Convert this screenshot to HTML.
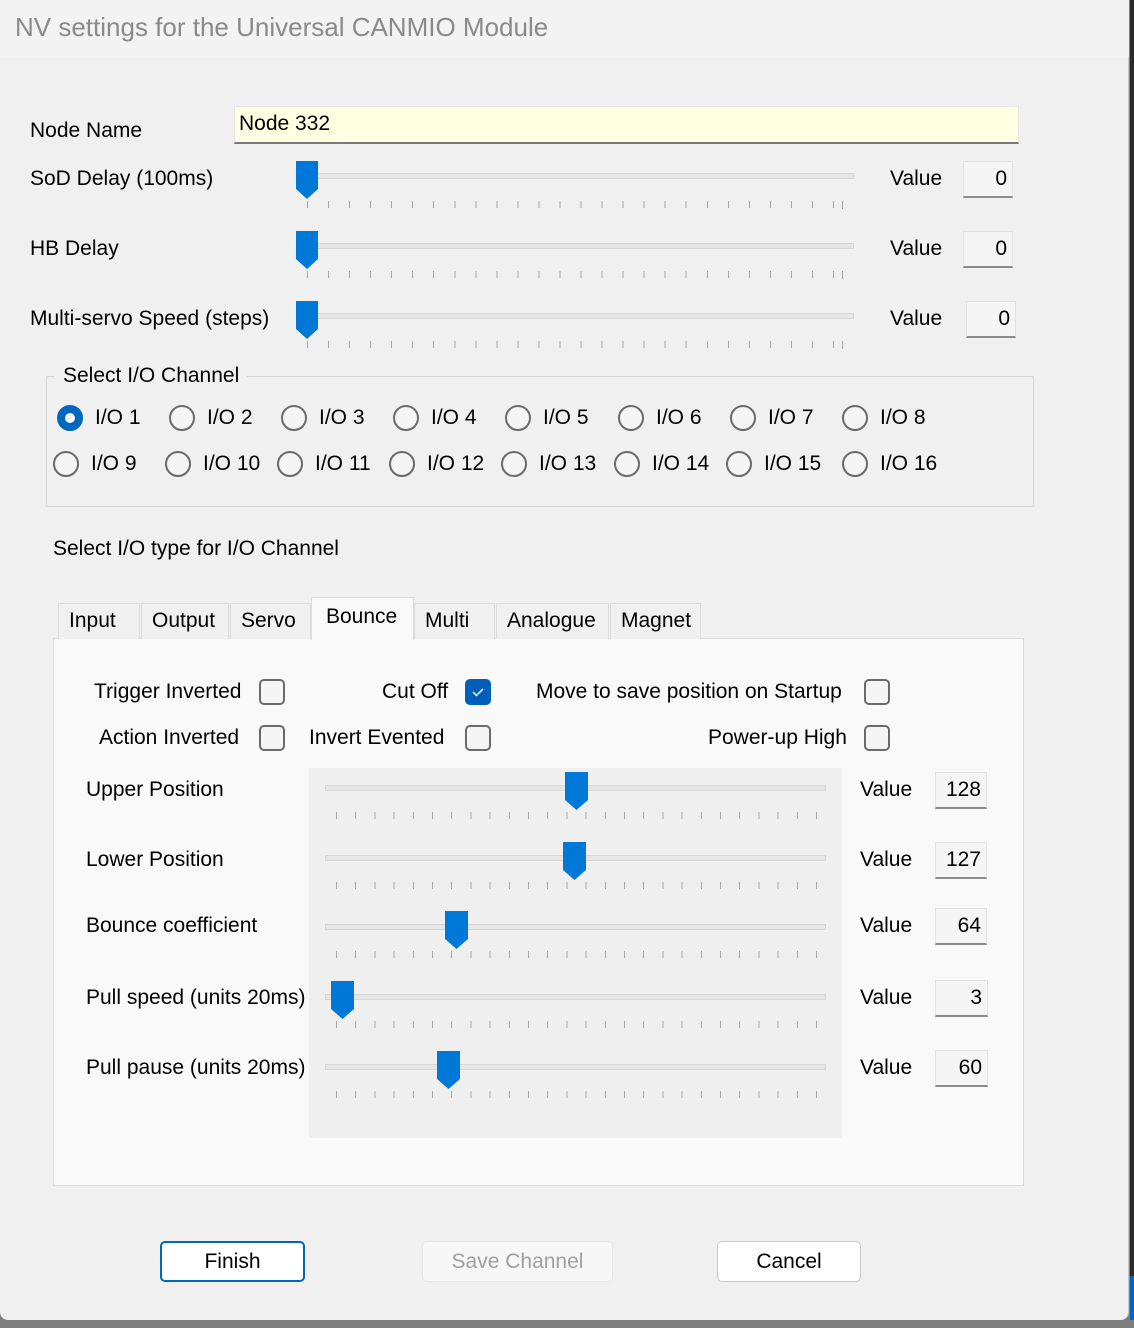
<!DOCTYPE html>
<html><head><meta charset="utf-8"><style>
*{box-sizing:border-box;margin:0;padding:0}
body{width:1134px;height:1328px;position:relative;overflow:hidden;background:#7f7f7f;font-family:"Liberation Sans",sans-serif;font-size:21px;color:#000;letter-spacing:0}
#win{position:absolute;left:0;top:0;width:1129px;height:1320px;background:#f0f0f0;border-radius:0 0 8px 8px;border-right:1px solid #c8c8c8}
#title{position:absolute;left:0;top:0;width:1129px;height:57px;background:#f3f3f3;color:#8a8a8a;font-size:26px;padding:12px 0 0 15px;letter-spacing:0}
.a{position:absolute;white-space:nowrap}
.track{position:absolute;height:6px;background:#e6e6e6;border:1px solid #d6d6d6}
.ticks{position:absolute;height:7px;background:repeating-linear-gradient(to right,#a8a8a8 0 1px,transparent 1px 21.04px)}
.ticks2{position:absolute;height:7px;background:repeating-linear-gradient(to right,#a8a8a8 0 1px,transparent 1px 19.2px)}
.val{position:absolute;width:50px;height:37px;background:#f5f5f5;border:1px solid #e2e2e2;border-bottom:2px solid #8a8a8a;text-align:right;padding:5px 5px 0 0}
.rad{position:absolute;width:26px;height:26px;border:2px solid #6a6a6a;border-radius:50%;background:#f5f5f5}
.rad.on{border:8px solid #0067c0;background:#fff}
.cb{position:absolute;width:26px;height:26px;border:2px solid #6a6a6a;border-radius:5px;background:#f5f5f5}
.tab{position:absolute;top:603px;height:36px;background:#f0f0f0;border:1px solid #dcdcdc;border-bottom:none;padding:5px 0 0 10px}
.btn{position:absolute;top:1241px;height:41px;background:#fff;border:1px solid #c8c8c8;border-radius:5px;text-align:center;padding-top:8px}
</style></head><body>
<div id="win">
<div id="title">NV settings for the Universal CANMIO Module</div>
<div class="a" style="left:30px;top:119px">Node Name</div>
<div class="a" style="left:234px;top:106px;width:785px;height:38px;background:#ffffe1;border:1px solid #e6e6e6;border-bottom:2px solid #7a7a7a;padding:5px 0 0 4px">Node 332</div>

<div class="a" style="left:30px;top:167px">SoD Delay (100ms)</div>
<div class="a" style="left:30px;top:237px">HB Delay</div>
<div class="a" style="left:30px;top:307px">Multi-servo Speed (steps)</div>

<div class="track" style="left:300px;top:173px;width:554px"></div>
<div class="track" style="left:300px;top:243px;width:554px"></div>
<div class="track" style="left:300px;top:313px;width:554px"></div>
<div class="ticks" style="left:307px;top:201px;width:528px"></div>
<div class="ticks" style="left:307px;top:271px;width:528px"></div>
<div class="ticks" style="left:307px;top:341px;width:528px"></div>
<div class="a" style="left:842px;top:201px;width:1px;height:8px;background:#a8a8a8"></div>
<div class="a" style="left:842px;top:271px;width:1px;height:8px;background:#a8a8a8"></div>
<div class="a" style="left:842px;top:341px;width:1px;height:8px;background:#a8a8a8"></div>
<svg class="a" style="left:296px;top:161px" width="22" height="38"><polygon points="0,0 22,0 22,28 11,38 0,28" fill="#0078d7"/></svg>
<svg class="a" style="left:296px;top:231px" width="22" height="38"><polygon points="0,0 22,0 22,28 11,38 0,28" fill="#0078d7"/></svg>
<svg class="a" style="left:296px;top:301px" width="22" height="38"><polygon points="0,0 22,0 22,28 11,38 0,28" fill="#0078d7"/></svg>
<div class="a" style="left:890px;top:167px">Value</div>
<div class="a" style="left:890px;top:237px">Value</div>
<div class="a" style="left:890px;top:307px">Value</div>
<div class="val" style="left:963px;top:161px">0</div>
<div class="val" style="left:963px;top:231px">0</div>
<div class="val" style="left:966px;top:301px">0</div>

<div class="a" style="left:46px;top:376px;width:988px;height:131px;border:1px solid #d5d5d5;border-radius:2px"></div>
<div class="a" style="left:55px;top:364px;background:#f0f0f0;padding:0 8px">Select I/O Channel</div>

<div class="rad on" style="left:57px;top:405px"></div><div class="a" style="left:95px;top:406px">I/O 1</div>
<div class="rad" style="left:169px;top:405px"></div><div class="a" style="left:207px;top:406px">I/O 2</div>
<div class="rad" style="left:281px;top:405px"></div><div class="a" style="left:319px;top:406px">I/O 3</div>
<div class="rad" style="left:393px;top:405px"></div><div class="a" style="left:431px;top:406px">I/O 4</div>
<div class="rad" style="left:505px;top:405px"></div><div class="a" style="left:543px;top:406px">I/O 5</div>
<div class="rad" style="left:618px;top:405px"></div><div class="a" style="left:656px;top:406px">I/O 6</div>
<div class="rad" style="left:730px;top:405px"></div><div class="a" style="left:768px;top:406px">I/O 7</div>
<div class="rad" style="left:842px;top:405px"></div><div class="a" style="left:880px;top:406px">I/O 8</div>

<div class="rad" style="left:53px;top:451px"></div><div class="a" style="left:91px;top:452px">I/O 9</div>
<div class="rad" style="left:165px;top:451px"></div><div class="a" style="left:203px;top:452px">I/O 10</div>
<div class="rad" style="left:277px;top:451px"></div><div class="a" style="left:315px;top:452px">I/O 11</div>
<div class="rad" style="left:389px;top:451px"></div><div class="a" style="left:427px;top:452px">I/O 12</div>
<div class="rad" style="left:501px;top:451px"></div><div class="a" style="left:539px;top:452px">I/O 13</div>
<div class="rad" style="left:614px;top:451px"></div><div class="a" style="left:652px;top:452px">I/O 14</div>
<div class="rad" style="left:726px;top:451px"></div><div class="a" style="left:764px;top:452px">I/O 15</div>
<div class="rad" style="left:842px;top:451px"></div><div class="a" style="left:880px;top:452px">I/O 16</div>

<div class="a" style="left:53px;top:537px">Select I/O type for I/O Channel</div>

<div class="a" style="left:53px;top:638px;width:971px;height:548px;background:#f9f9f9;border:1px solid #dcdcdc"></div>
<div class="tab" style="left:58px;width:82px">Input</div>
<div class="tab" style="left:141px;width:88px">Output</div>
<div class="tab" style="left:230px;width:81px">Servo</div>
<div class="tab" style="left:311px;top:597px;height:43px;width:103px;background:#f9f9f9;padding-top:7px;padding-left:14px">Bounce</div>
<div class="tab" style="left:414px;width:81px">Multi</div>
<div class="tab" style="left:496px;width:113px">Analogue</div>
<div class="tab" style="left:610px;width:91px">Magnet</div>

<div class="a" style="left:94px;top:680px">Trigger Inverted</div>
<div class="cb" style="left:259px;top:679px"></div>
<div class="a" style="left:382px;top:680px">Cut Off</div>
<div class="cb" style="left:465px;top:679px;background:#005fb8;border-color:#005fb8"><svg width="22" height="22" style="position:absolute;left:0;top:0"><path d="M6 11 L9.5 14.5 L16 8" stroke="#fff" stroke-width="1.5" fill="none"/></svg></div>
<div class="a" style="left:536px;top:680px">Move to save position on Startup</div>
<div class="cb" style="left:864px;top:679px"></div>
<div class="a" style="left:99px;top:726px">Action Inverted</div>
<div class="cb" style="left:259px;top:725px"></div>
<div class="a" style="left:309px;top:726px">Invert Evented</div>
<div class="cb" style="left:465px;top:725px"></div>
<div class="a" style="left:708px;top:726px">Power-up High</div>
<div class="cb" style="left:864px;top:725px"></div>

<div class="a" style="left:309px;top:768px;width:533px;height:370px;background:#efefef"></div>
<div class="a" style="left:86px;top:778px">Upper Position</div>
<div class="a" style="left:86px;top:848px">Lower Position</div>
<div class="a" style="left:86px;top:914px">Bounce coefficient</div>
<div class="a" style="left:86px;top:986px">Pull speed (units 20ms)</div>
<div class="a" style="left:86px;top:1056px">Pull pause (units 20ms)</div>

<div class="track" style="left:325px;top:785px;width:501px"></div>
<div class="track" style="left:325px;top:855px;width:501px"></div>
<div class="track" style="left:325px;top:924px;width:501px"></div>
<div class="track" style="left:325px;top:994px;width:501px"></div>
<div class="track" style="left:325px;top:1064px;width:501px"></div>
<div class="ticks2" style="left:336px;top:812px;width:482px"></div>
<div class="ticks2" style="left:336px;top:882px;width:482px"></div>
<div class="ticks2" style="left:336px;top:951px;width:482px"></div>
<div class="ticks2" style="left:336px;top:1021px;width:482px"></div>
<div class="ticks2" style="left:336px;top:1091px;width:482px"></div>
<svg class="a" style="left:565px;top:772px" width="23" height="38"><polygon points="0,0 23,0 23,28 11.5,38 0,28" fill="#0078d7"/></svg>
<svg class="a" style="left:563px;top:842px" width="23" height="38"><polygon points="0,0 23,0 23,28 11.5,38 0,28" fill="#0078d7"/></svg>
<svg class="a" style="left:445px;top:911px" width="23" height="38"><polygon points="0,0 23,0 23,28 11.5,38 0,28" fill="#0078d7"/></svg>
<svg class="a" style="left:331px;top:981px" width="23" height="38"><polygon points="0,0 23,0 23,28 11.5,38 0,28" fill="#0078d7"/></svg>
<svg class="a" style="left:437px;top:1051px" width="23" height="38"><polygon points="0,0 23,0 23,28 11.5,38 0,28" fill="#0078d7"/></svg>

<div class="a" style="left:860px;top:778px">Value</div>
<div class="a" style="left:860px;top:848px">Value</div>
<div class="a" style="left:860px;top:914px">Value</div>
<div class="a" style="left:860px;top:986px">Value</div>
<div class="a" style="left:860px;top:1056px">Value</div>
<div class="val" style="left:935px;top:772px;width:52px">128</div>
<div class="val" style="left:935px;top:842px;width:52px">127</div>
<div class="val" style="left:935px;top:908px;width:52px">64</div>
<div class="val" style="left:935px;top:980px;width:53px">3</div>
<div class="val" style="left:935px;top:1050px;width:53px">60</div>

<div class="btn" style="left:160px;width:145px;border:2px solid #0067c0;padding-top:7px">Finish</div>
<div class="btn" style="left:422px;width:191px;background:#f7f7f7;border-color:#e6e6e6;color:#a0a0a0">Save Channel</div>
<div class="btn" style="left:717px;width:144px">Cancel</div>
</div>
<div class="a" style="left:1130px;top:0;width:4px;height:1320px;background:#2a2a2a"></div>
<div class="a" style="left:1130px;top:1276px;width:4px;height:44px;background:#0067c0"></div>
</body></html>
